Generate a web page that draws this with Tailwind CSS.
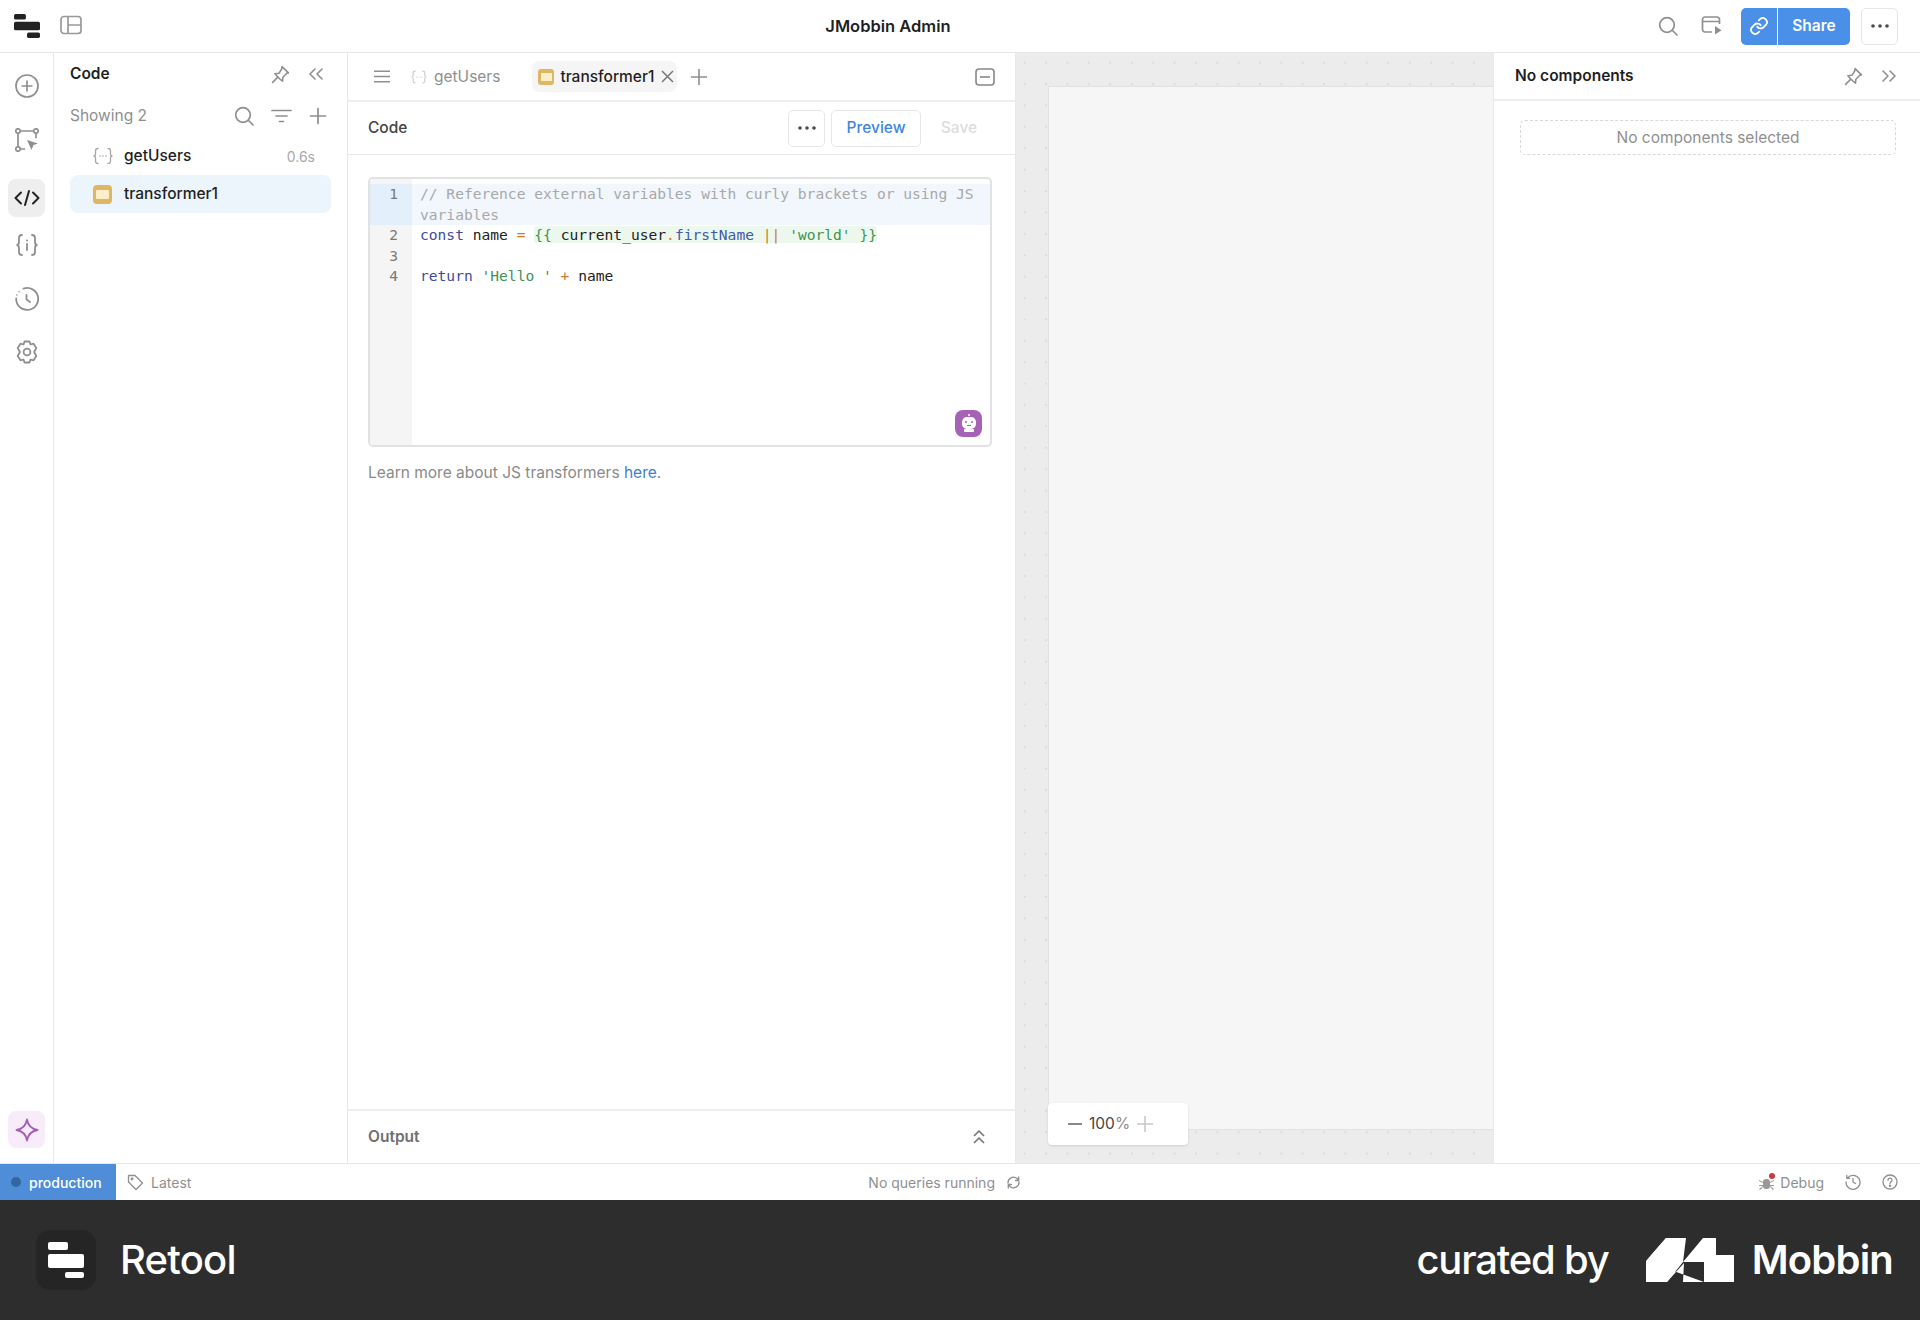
<!DOCTYPE html>
<html lang="en">
<head>
    <meta charset="UTF-8">
    <title>JMobbin Admin</title>
    <script src="https://cdn.jsdelivr.net/npm/@tailwindcss/browser@4"></script>
</head>
<body class="w-[1920px] h-[1320px] overflow-hidden bg-white font-['Inter',sans-serif] flex flex-col text-[#1f1f1f]">
    <!-- Top bar -->
    <header class="h-[53px] shrink-0 border-b border-[#e8e8e8] flex items-center">
        <div class="w-[800px] flex items-center pl-[14px]">
            <svg width="26" height="26" viewBox="0 0 24 24" fill="#222"><rect x="0" y="1" width="11" height="5" rx="1.5"/><rect x="0" y="8" width="24" height="8" rx="1.5"/><rect x="12" y="18" width="12" height="5" rx="1.5"/></svg>
            <svg class="ml-[20px]" width="22" height="22" viewBox="0 0 22 22" fill="none" stroke="#999" stroke-width="1.7"><rect x="1" y="1.5" width="20" height="17" rx="3"/><path d="M8 1.5v17M8 10h13"/></svg>
        </div>
        <div class="w-[192px] text-center text-[16.5px] font-semibold whitespace-nowrap -ml-[8px]">JMobbin Admin</div>
        <div class="flex-1 flex items-center justify-end pr-[22px]">
            <svg width="20" height="20" viewBox="0 0 20 20" fill="none" stroke="#8f8f8f" stroke-width="1.7"><circle cx="9" cy="9" r="7.3"/><path d="M14.5 14.5l4.5 4.5" stroke-linecap="round"/></svg>
            <svg class="ml-[23px]" width="21" height="20" viewBox="0 0 21 20" fill="none" stroke="#8f8f8f" stroke-width="1.7"><path d="M11 16H4a2.5 2.5 0 0 1-2.5-2.500V3.500A2.500 2.500 0 0 1 4 1h12a2.500 2.500 0 0 1 2.500 2.500V8M1.500 5.500h17"/><path d="M14 10l6.500 4.200L14 18.500z" fill="#8f8f8f" stroke="none"/></svg>
            <div class="ml-[19px] h-[37px] flex rounded-[5px] overflow-hidden bg-[#4a90e8] text-white">
                <div class="w-[37px] flex items-center justify-center border-r border-white">
                    <svg width="20" height="20" viewBox="0 0 24 24" fill="none" stroke="#fff" stroke-width="2.200" stroke-linecap="round"><path d="M10 13a5 5 0 0 0 7.500.500l3-3a5 5 0 0 0-7-7l-1.700 1.700"/><path d="M14 11a5 5 0 0 0-7.500-.500l-3 3a5 5 0 0 0 7 7l1.700-1.700"/></svg>
                </div>
                <div class="w-[72px] flex items-center justify-center text-[15.500px] font-semibold">Share</div>
            </div>
            <div class="ml-[11px] w-[37px] h-[37px] rounded-[5px] border border-[#e6e6e6] flex items-center justify-center">
                <svg width="18" height="4" viewBox="0 0 18 4" fill="#4a4a4a"><circle cx="2" cy="2" r="1.800"/><circle cx="9" cy="2" r="1.800"/><circle cx="16" cy="2" r="1.800"/></svg>
            </div>
        </div>
    </header>

    <div class="flex-1 min-h-0 flex">
        <!-- Icon rail -->
        <nav class="w-[54px] shrink-0 border-r border-[#e8e8e8] flex flex-col items-center pt-[20px] pb-[15px]">
            <div class="h-[53.500px] w-[37px] flex justify-center pt-[1px]">
                <svg width="24" height="24" viewBox="0 0 24 24" fill="none" stroke="#8f8f8f" stroke-width="1.700"><circle cx="12" cy="12" r="11"/><path d="M12 6.500v11M6.500 12h11"/></svg>
            </div>
            <div class="h-[53.500px] w-[37px] flex justify-center pt-[1px]">
                <svg width="24" height="24" viewBox="0 0 24 24" fill="none" stroke="#8f8f8f" stroke-width="1.700"><circle cx="3" cy="3" r="2.200"/><circle cx="21" cy="3" r="2.200"/><circle cx="3" cy="21" r="2.200"/><path d="M5.200 3h13.600M3 5.200v13.600M5.200 21h5M21 5.200v5"/><path d="M12 12l11 3.500-4.500 1.500-2 5z" fill="#8f8f8f" stroke="none"/></svg>
            </div>
            <div class="h-[38px] w-[37px] -mt-[1px] mb-[16px] rounded-lg bg-[#eeeeee] flex items-center justify-center">
                <svg width="26" height="18" viewBox="0 0 26 18" fill="none" stroke="#222" stroke-width="2" stroke-linecap="round" stroke-linejoin="round"><path d="M7 3.500L1.500 9 7 14.500M19 3.500L24.500 9 19 14.500M15 2l-4 14"/></svg>
            </div>
            <div class="h-[53.500px] w-[37px] flex justify-center">
                <svg width="24" height="24" viewBox="0 0 24 24" fill="none" stroke="#8f8f8f" stroke-width="1.800" stroke-linecap="round"><path d="M7 2C4.500 2 4 3.500 4 5v4c0 1.500-.500 3-2.500 3 2 0 2.500 1.500 2.500 3v4c0 1.500.500 3 3 3M17 2c2.500 0 3 1.500 3 3v4c0 1.500.500 3 2.500 3-2 0-2.500 1.500-2.500 3v4c0 1.500-.500 3-3 3M12 11v6"/><circle cx="12" cy="7.500" r="1" fill="#8f8f8f" stroke="none"/></svg>
            </div>
            <div class="h-[53.500px] w-[37px] flex justify-center">
                <svg width="24" height="24" viewBox="0 0 24 24" fill="none" stroke="#8f8f8f" stroke-width="1.800" stroke-linecap="round" stroke-linejoin="round"><path d="M8.500 1.600A11 11 0 1 1 1.200 11.500" /><path d="M1.800 8l.1 0M4 4.700l.1 0" stroke-width="1.500"/><path d="M11.500 8v4.500l3.500 2.500"/></svg>
            </div>
            <div class="h-[53.500px] w-[37px] flex justify-center">
                <svg width="24" height="24" viewBox="0 0 24 24" fill="none" stroke="#8f8f8f" stroke-width="1.800" stroke-linejoin="round"><circle cx="12" cy="12" r="3.400"/><path d="M9.500 1.500h5l1 3 3-.8 2.800 4.300-2.200 4 2.200 4-2.800 4.300-3-.8-1 3h-5l-1-3-3 .8L2.700 16l2.200-4-2.200-4 2.800-4.300 3 .8z"/></svg>
            </div>
            <div class="mt-auto h-[37px] w-[37px] rounded-lg bg-[#f8ecfa] flex items-center justify-center">
                <svg width="24" height="24" viewBox="0 0 24 24" fill="none" stroke="#a45fb8" stroke-width="1.800" stroke-linejoin="round"><path d="M12 1.500c1 6 4.500 9.500 10.500 10.500-6 1-9.500 4.500-10.500 10.500C11 16.500 7.500 13 1.500 12 7.500 11 11 7.500 12 1.500z"/></svg>
            </div>
        </nav>

        <!-- Code list panel -->
        <aside class="w-[294px] shrink-0 border-r border-[#e8e8e8] flex flex-col">
            <div class="h-[42px] pl-[16px] pr-[24px] flex items-center justify-between">
                <span class="text-[15.500px] font-semibold">Code</span>
                <div class="flex items-center gap-[19px]">
                    <svg width="19" height="19" viewBox="0 0 24 24" fill="none" stroke="#8f8f8f" stroke-width="2" stroke-linejoin="round" stroke-linecap="round"><path d="M14 2l8 8-2 .5-5 5-.5 5-3-2.500-4-4L5 11l5-.5 3.500-5.500zM8 16l-6 6"/></svg>
                    <svg width="14" height="12" viewBox="0 0 14 12" fill="none" stroke="#8f8f8f" stroke-width="1.600" stroke-linecap="round" stroke-linejoin="round"><path d="M6 1L1 6l5 5M13 1L8 6l5 5"/></svg>
                </div>
            </div>
            <div class="h-[42px] pl-[16px] pr-[20px] flex items-center justify-between">
                <span class="text-[15.500px] text-[#8f8f8f]">Showing 2</span>
                <div class="flex items-center gap-[17px]">
                    <svg width="20" height="20" viewBox="0 0 20 20" fill="none" stroke="#8f8f8f" stroke-width="1.700"><circle cx="9" cy="9" r="7.300"/><path d="M14.500 14.500l4.500 4.500" stroke-linecap="round"/></svg>
                    <svg width="21" height="14" viewBox="0 0 21 14" fill="none" stroke="#8f8f8f" stroke-width="1.700" stroke-linecap="round"><path d="M1 1.500h19M5 7h11M8.500 12.500h4"/></svg>
                    <svg width="18" height="18" viewBox="0 0 18 18" fill="none" stroke="#8f8f8f" stroke-width="1.700" stroke-linecap="round"><path d="M9 1.500v15M1.500 9h15"/></svg>
                </div>
            </div>
            <div class="h-[38px] ml-[16px] mr-[16px] pl-[22px] pr-[16px] flex items-center">
                <svg width="22" height="18" viewBox="0 0 22 18" fill="none" stroke="#a8a8a8" stroke-width="1.300" stroke-linecap="round"><path d="M6 1.500C4 1.500 3.500 2.500 3.500 4v3c0 1-.500 2-2 2 1.500 0 2 1 2 2v3c0 1.500.500 2.500 2.500 2.500M16 1.500c2 0 2.500 1 2.500 2.500v3c0 1 .500 2 2 2-1.500 0-2 1-2 2v3c0 1.500-.500 2.500-2.500 2.500"/><path d="M8 9h.1M11 9h.1M14 9h.1" stroke-width="1.600"/></svg>
                <span class="ml-[10px] text-[15.500px] font-medium">getUsers</span>
                <span class="ml-auto text-[14px] text-[#a8a8a8]">0.6s</span>
            </div>
            <div class="h-[38px] ml-[16px] mr-[16px] pl-[23px] rounded-lg bg-[#edf5fc] flex items-center">
                <div class="w-[19px] h-[19px] rounded-[4px] bg-[#deb765] flex items-start justify-center pt-[5px]">
                    <div class="w-[13px] h-[9px] rounded-[1px] bg-[#fbeecb] border-t-[2px] border-[#fbeecb]"></div>
                </div>
                <span class="ml-[12px] text-[15.500px] font-medium">transformer1</span>
            </div>
        </aside>

        <!-- Editor panel -->
        <main class="w-[667px] shrink-0 flex flex-col">
            <div class="h-[49px] shrink-0 border-b-2 border-[#eeeeee] flex items-center pl-[26px] pr-[20px]">
                <svg width="16" height="13" viewBox="0 0 16 13" fill="none" stroke="#8f8f8f" stroke-width="1.600"><path d="M0 1.200h16M0 6.500h16M0 11.800h16"/></svg>
                <svg class="ml-[20px]" width="18" height="14" viewBox="0 0 22 18" fill="none" stroke="#c9c9c9" stroke-width="1.400" stroke-linecap="round"><path d="M6 1.500C4 1.500 3.500 2.500 3.500 4v3c0 1-.500 2-2 2 1.500 0 2 1 2 2v3c0 1.500.500 2.500 2.500 2.500M16 1.500c2 0 2.500 1 2.500 2.500v3c0 1 .500 2 2 2-1.500 0-2 1-2 2v3c0 1.500-.500 2.500-2.500 2.500"/><path d="M8 9h.1M11 9h.1M14 9h.1" stroke-width="1.600"/></svg>
                <span class="ml-[6px] text-[15.500px] text-[#8f8f8f]">getUsers</span>
                <div class="ml-[32px] h-[31px] pl-[6px] pr-[3px] rounded-lg bg-[#f5f5f5] flex items-center">
                    <div class="w-[16px] h-[16px] rounded-[3px] bg-[#deb765] flex items-start justify-center pt-[4px]">
                        <div class="w-[11px] h-[8px] bg-[#fbeecb]"></div>
                    </div>
                    <span class="ml-[6px] text-[15.500px] font-medium">transformer1</span>
                    <svg class="ml-[7px]" width="13" height="13" viewBox="0 0 13 13" fill="none" stroke="#777" stroke-width="1.500"><path d="M1 1l11 11M12 1L1 12"/></svg>
                </div>
                <svg class="ml-[14px]" width="16" height="16" viewBox="0 0 16 16" fill="none" stroke="#8f8f8f" stroke-width="1.600"><path d="M8 0v16M0 8h16"/></svg>
                <svg class="ml-auto" width="20" height="18" viewBox="0 0 20 18" fill="none" stroke="#888" stroke-width="1.600"><rect x="1" y="1" width="18" height="16" rx="3"/><path d="M5 9h10"/></svg>
            </div>
            <div class="h-[53px] shrink-0 border-b border-[#e8e8e8] flex items-center pl-[20px] pr-[18px]">
                <span class="text-[15.500px] text-[#444] font-medium">Code</span>
                <div class="ml-auto w-[37px] h-[37px] rounded-[5px] border border-[#e6e6e6] flex items-center justify-center">
                    <svg width="18" height="4" viewBox="0 0 18 4" fill="#4a4a4a"><circle cx="2" cy="2" r="1.800"/><circle cx="9" cy="2" r="1.800"/><circle cx="16" cy="2" r="1.800"/></svg>
                </div>
                <div class="ml-[6px] w-[90px] h-[37px] rounded-[5px] border border-[#e6e6e6] flex items-center justify-center text-[15.500px] font-medium text-[#3f86e0]">Preview</div>
                <div class="w-[76px] text-center text-[15.500px] font-medium text-[#dcdcdc]">Save</div>
            </div>
            <div class="flex-1 min-h-0 pt-[22px] px-[20px]">
                <div class="relative h-[270px] w-[624px] rounded-[5px] border-2 border-[#e2e2e2] overflow-hidden font-['DejaVu_Sans_Mono',monospace] text-[14.600px] leading-[20.500px] pt-[5px]">
                    <div class="absolute left-0 top-0 bottom-0 w-[42px] bg-[#f5f5f5]"></div>
                    <div class="relative flex bg-[#f1f7fc]">
                        <div class="w-[42px] h-[41px] shrink-0 bg-[#e4effc] text-[#7a7a7a] pr-[14px] text-right">1</div>
                        <div class="pl-[8px] pr-[14px] text-[#a8a8a8]">// Reference external variables with curly brackets or using JS variables</div>
                    </div>
                    <div class="relative flex">
                        <div class="w-[42px] shrink-0 text-[#7a7a7a] pr-[14px] text-right">2</div>
                        <div class="pl-[8px] whitespace-pre"><span class="text-[#3e4a9e] font-medium">const</span> <span class="text-[#222]">name</span> <span class="text-[#d07a2c]">=</span> <span class="bg-[#ecf8ee] rounded-[3px]"><span class="text-[#3f9350]">{{</span> <span class="text-[#222]">current_user</span><span class="text-[#d07a2c]">.</span><span class="text-[#3e5aa8]">firstName</span> <span class="text-[#d07a2c]">||</span> <span class="text-[#3f9350]">'world'</span> <span class="text-[#3f9350]">}}</span></span></div>
                    </div>
                    <div class="relative flex">
                        <div class="w-[42px] shrink-0 text-[#7a7a7a] pr-[14px] text-right">3</div>
                    </div>
                    <div class="relative flex">
                        <div class="w-[42px] shrink-0 text-[#7a7a7a] pr-[14px] text-right">4</div>
                        <div class="pl-[8px] whitespace-pre"><span class="text-[#3e4a9e] font-medium">return</span> <span class="text-[#3f9350]">'Hello '</span> <span class="text-[#d07a2c]">+</span> <span class="text-[#222]">name</span></div>
                    </div>
                    <div class="absolute right-[8px] bottom-[8px] w-[27px] h-[27px] rounded-lg bg-[#a562b6] flex items-center justify-center">
                        <svg width="20" height="22" viewBox="0 0 20 22" fill="#fff"><circle cx="10" cy="2" r="1"/><rect x="3" y="4" width="14" height="12" rx="5"/><rect x="5" y="16" width="10" height="3" rx="1"/><circle cx="7" cy="9" r="1" fill="#a562b6"/><circle cx="13" cy="9" r="1" fill="#a562b6"/><rect x="8" y="12" width="4" height="1" fill="#a562b6"/></svg>
                    </div>
                </div>
                <p class="mt-[14px] text-[15.500px] text-[#8a8a8a]">Learn more about JS transformers <span class="text-[#3f7fcf]">here</span>.</p>
            </div>
            <div class="h-[54px] shrink-0 border-t-2 border-[#eeeeee] flex items-center pl-[20px] pr-[30px]">
                <span class="text-[15.500px] font-semibold text-[#6f6f6f]">Output</span>
                <svg class="ml-auto" width="12" height="14" viewBox="0 0 12 14" fill="none" stroke="#777" stroke-width="1.700" stroke-linejoin="round"><path d="M1 6l5-5 5 5M1 13l5-5 5 5"/></svg>
            </div>
        </main>

        <!-- Canvas -->
        <section class="relative w-[478px] shrink-0 pt-[33px] pl-[32px] border-l border-[#e8e8e8] bg-[#ececec] bg-[radial-gradient(#dcdcdc_1px,transparent_1.500px)] bg-[size:21.400px_21.400px] bg-[position:-2px_-1px]">
            <div class="h-[1044px] bg-[#f6f6f6] border-l border-t border-b border-[#e2e2e2]"></div>
            <div class="absolute left-[32px] top-[1050px] w-[140px] h-[42px] rounded-[4px] bg-white shadow-sm flex items-center pl-[20px]">
                <svg width="14" height="2" viewBox="0 0 14 2"><rect width="14" height="2" fill="#888"/></svg>
                <span class="ml-[7px] mt-0 text-[15.500px] text-[#444]">100<span class="text-[#8a8a8a]">%</span></span>
                <svg class="ml-[7px]" width="16" height="16" viewBox="0 0 16 16" fill="none" stroke="#c9c9c9" stroke-width="1.600"><path d="M8 0v16M0 8h16"/></svg>
            </div>
        </section>

        <!-- Inspector -->
        <aside class="flex-1 border-l border-[#e8e8e8] flex flex-col">
            <div class="h-[48px] shrink-0 border-b-2 border-[#eeeeee] flex items-center pl-[21px] pr-[24px]">
                <span class="text-[15.500px] font-semibold">No components</span>
                <svg class="ml-auto" width="19" height="19" viewBox="0 0 24 24" fill="none" stroke="#8f8f8f" stroke-width="2" stroke-linejoin="round" stroke-linecap="round"><path d="M14 2l8 8-2 .5-5 5-.5 5-3-2.500-4-4L5 11l5-.5 3.500-5.500zM8 16l-6 6"/></svg>
                <svg class="ml-[19px]" width="14" height="12" viewBox="0 0 14 12" fill="none" stroke="#8f8f8f" stroke-width="1.600" stroke-linecap="round" stroke-linejoin="round"><path d="M8 1l5 5-5 5M1 1l5 5-5 5"/></svg>
            </div>
            <div class="mt-[19px] ml-[26px] w-[376px] h-[35px] rounded-[5px] border border-dashed border-[#d8d8d8] flex items-center justify-center text-[15.500px] text-[#8f8f8f]">No components selected</div>
        </aside>
    </div>

    <!-- Status bar -->
    <footer class="h-[37px] shrink-0 border-t border-[#e8e8e8] flex items-center text-[14px] text-[#8f8f8f]">
        <div class="w-[116px] h-full bg-[#4f8dd8] flex items-center pl-[11px]">
            <div class="w-[10px] h-[10px] rounded-full bg-[#34659f]"></div>
            <span class="ml-[8px] text-white font-medium">production</span>
        </div>
        <svg class="ml-[11px]" width="17" height="17" viewBox="0 0 17 17" fill="none" stroke="#8f8f8f" stroke-width="1.300" stroke-linejoin="round"><path d="M1.500 1.500h6.500l7.500 7.500-6.500 6.500L1.500 8z"/><circle cx="5" cy="5" r=".8"/></svg>
        <span class="ml-[7px]">Latest</span>
        <span class="ml-[677px]">No queries running</span>
        <svg class="ml-[11px]" width="15" height="15" viewBox="0 0 15 15" fill="none" stroke="#8f8f8f" stroke-width="1.300" stroke-linecap="round" stroke-linejoin="round"><path d="M2 8a5.500 5.500 0 0 1 9-4.500L12.500 5M13 7a5.500 5.500 0 0 1-9 4.500L2.500 10M9.500 5.500h3.200V2M5.500 9.500H2.300V13"/></svg>
        <div class="ml-auto flex items-center pr-[22px]">
            <div class="relative">
                <svg width="15" height="16" viewBox="0 0 15 16" fill="#999"><rect x="4" y="5" width="7" height="10" rx="3"/><path d="M0 6l4 2v1L0 7zM0 11h4v1H0zM0 15l4-3v1l-3 3zM15 6l-4 2v1l4-2zM15 11h-4v1h4zM15 15l-4-3v1l3 3z"/></svg>
                <div class="absolute -top-[1px] right-[-1px] w-[6px] h-[6px] rounded-full bg-[#c93c3c]"></div>
            </div>
            <span class="ml-[6px]">Debug</span>
            <svg class="ml-[21px]" width="16" height="16" viewBox="0 0 16 16" fill="none" stroke="#8f8f8f" stroke-width="1.300" stroke-linecap="round" stroke-linejoin="round"><path d="M2.500 4A7 7 0 1 1 1 8M1.800 1.500V4.300h2.800M8 4.500V8l2.500 1.500"/></svg>
            <svg class="ml-[21px]" width="16" height="16" viewBox="0 0 16 16" fill="none" stroke="#8f8f8f" stroke-width="1.300" stroke-linecap="round"><circle cx="8" cy="8" r="7"/><path d="M6 6.200a2 2 0 1 1 3 1.700c-.700.400-1 .800-1 1.600"/><circle cx="8" cy="11.800" r=".6" fill="#8f8f8f"/></svg>
        </div>
    </footer>

    <!-- Attribution strip -->
    <div class="h-[120px] shrink-0 bg-[#2d2d2d] flex items-center text-white pl-[36px] pr-[27px]">
        <div class="w-[60px] h-[60px] rounded-[14px] bg-[#252525] flex items-center justify-center">
            <svg width="36" height="36" viewBox="0 0 36 36" fill="#fff"><rect x="0" y="0" width="20" height="8" rx="2"/><rect x="0" y="12" width="36" height="14" rx="2"/><rect x="17" y="30" width="19" height="6" rx="2"/></svg>
        </div>
        <span class="ml-[24px] text-[40px] font-medium tracking-[-0.020em]">Retool</span>
        <span class="ml-auto text-[40px] font-medium tracking-[-0.030em]">curated by</span>
        <svg class="ml-[37px]" width="88" height="44" viewBox="0 0 88 44" fill="#fff"><path d="M0 23L20 0h17l-2 2-14 0zM0 23V44h21L38 25h0L37 44V44h21L58 44H58V25H88V44H58" /><path d="M0 23 20 0h20l-3 24 L21 44H0zM37 24 57 0h13v17h18v27H58V24z"/></svg>
        <span class="ml-[18px] text-[40px] font-semibold tracking-[-0.020em]">Mobbin</span>
    </div>
</body>
</html>
